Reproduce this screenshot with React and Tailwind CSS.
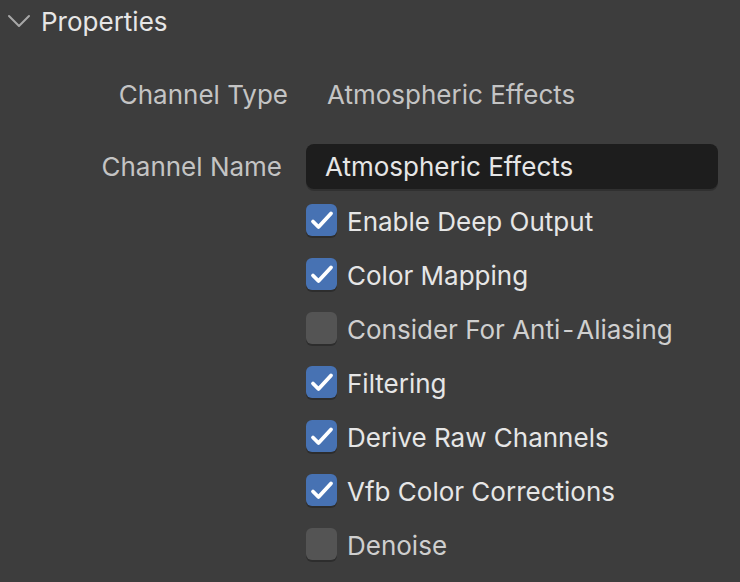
import React from "react";

const options = [
  { label: "Enable Deep Output", checked: true },
  { label: "Color Mapping", checked: true },
  { label: "Consider For Anti-Aliasing", checked: false },
  { label: "Filtering", checked: true },
  { label: "Derive Raw Channels", checked: true },
  { label: "Vfb Color Corrections", checked: true },
  { label: "Denoise", checked: false },
];

const Checkbox = ({ checked }) => (
  <div
    className={`h-[32px] w-[31px] rounded-[6px] shadow-[0_2px_0_rgba(0,0,0,0.25)] ${
      checked ? "bg-[#4772b3]" : "bg-[#545454]"
    }`}
  >
    {checked && (
      <svg width="31" height="32" viewBox="0 0 31 32" fill="none">
        <path d="M7 17.5l5.5 5.5L25 9.5" stroke="white" strokeWidth="3.8" strokeLinecap="round" strokeLinejoin="round" />
      </svg>
    )}
  </div>
);

const Label = ({ text }) => {
  const parts = text.split("-");
  if (parts.length === 1) return text;
  return (
    <>
      {parts[0]}
      <span className="mx-[2px]">-</span>
      {parts[1]}
    </>
  );
};

const App = () => {
  return (
    <div className="w-[740px] h-[582px] bg-[#3d3d3d] overflow-hidden" style={{ fontFamily: "Inter, 'DejaVu Sans', sans-serif" }}>
      <div className="flex items-center h-[42px] pl-[7px]">
        <svg width="24" height="24" viewBox="0 0 24 24" fill="none">
          <path d="M2 7l10 10 10-10" stroke="#a8a8a8" strokeWidth="2" strokeLinecap="round" strokeLinejoin="round" />
        </svg>
        <span className="ml-[10px] text-[26px] text-[#e6e6e6]">Properties</span>
      </div>

      <div className="flex items-center mt-[29px] h-[46px]">
        <div className="w-[288px] text-right text-[26px] text-[#c4c4c4]">Channel Type</div>
        <div className="ml-[39px] text-[26px] text-[#c4c4c4]">Atmospheric Effects</div>
      </div>

      <div className="flex items-center mt-[27px] h-[45px]">
        <div className="w-[282px] text-right text-[26px] text-[#c4c4c4]">Channel Name</div>
        <div className="ml-[24px] w-[412px] h-[45px] rounded-[8px] bg-[#1d1d1d] flex items-center pl-[19px] text-[26px] text-[#e6e6e6] shadow-[0_2px_0_rgba(0,0,0,0.2)]">
          Atmospheric Effects
        </div>
      </div>

      <div className="flex flex-col pl-[306px] mt-[15px] gap-[22px]">
        {options.map((o) => (
          <div key={o.label} className="flex items-center h-[32px]">
            <Checkbox checked={o.checked} />
            <span className={`ml-[10px] pt-[2px] text-[26px] ${o.checked ? "text-[#e6e6e6]" : "text-[#cfcfcf]"}`}>
              <Label text={o.label} />
            </span>
          </div>
        ))}
      </div>
    </div>
  );
};

export default App;
